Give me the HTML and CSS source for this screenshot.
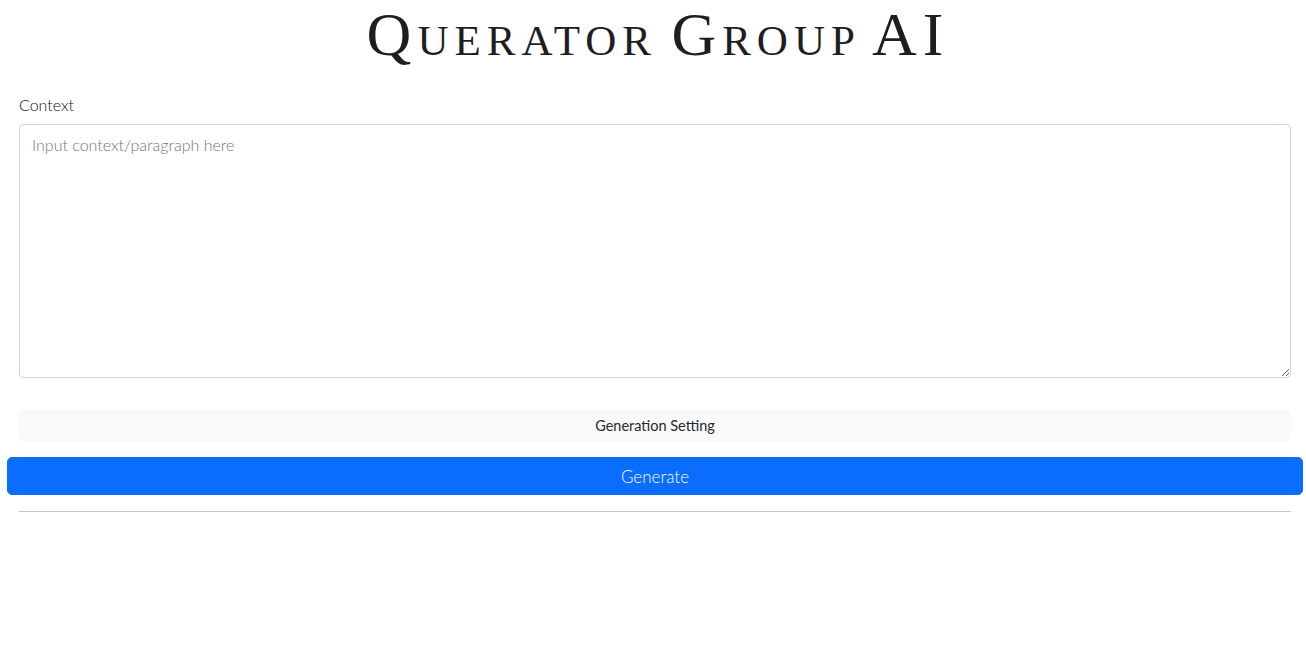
FILE: index.html
```html
<!DOCTYPE html>
<html lang="en">
<head>
<meta charset="utf-8">
<title>Querator Group AI</title>
<link rel="stylesheet" href="styles.css">
</head>
<body>
<div class="page">
  <h1 class="title">Querator Group AI</h1>
  <div class="form">
    <label class="label" for="ctx">Context</label>
    <textarea id="ctx" class="context" placeholder="Input context/paragraph here"></textarea>
    <div class="settings">Generation Setting</div>
  </div>
  <button class="generate" type="button">Generate</button>
  <div class="form">
    <hr class="rule">
  </div>
</div>
</body>
</html>
```

FILE: styles.css
```css
* { box-sizing: border-box; }
html, body { margin: 0; padding: 0; background: #fff; }
body {
  font-family: Lato, "Liberation Sans", sans-serif;
  font-weight: 300;
  color: #212529;
}
.page {
  padding: 0 3px 0 7px;
  display: flex;
  flex-direction: column;
}
.title {
  margin: 1px 0 0;
  padding-left: 6px;
  text-align: center;
  font-family: "Liberation Serif", serif;
  font-variant: small-caps;
  font-weight: 400;
  font-size: 62px;
  letter-spacing: 6px;
  word-spacing: -7px;
  line-height: 66px;
  color: #1d1d22;
}
.form {
  padding: 0 12px;
  display: flex;
  flex-direction: column;
}
.label {
  margin-top: 26px;
  font-size: 16px;
  line-height: 24px;
  color: #111;
}
.context {
  margin-top: 7px;
  height: 254px;
  width: 100%;
  border: 1px solid #ced4da;
  border-radius: 4px;
  padding: 8px 12px;
  font-family: inherit;
  font-weight: 300;
  font-size: 16px;
  line-height: 24px;
  color: #212529;
  resize: vertical;
  outline: none;
}
.context::placeholder { color: #757575; opacity: 1; }
.settings {
  margin-top: 32px;
  height: 31px;
  background: #f8f9fa;
  border-radius: 4px;
  display: flex;
  align-items: center;
  justify-content: center;
  font-size: 14.5px;
  font-weight: 400;
  color: #2a2a2a;
}
.generate {
  margin-top: 16px;
  height: 38px;
  width: 100%;
  border: 1px solid #0d6efd;
  border-radius: 5px;
  background: #0b6dfd;
  color: #fff;
  font-family: inherit;
  font-weight: 300;
  font-size: 17px;
  cursor: pointer;
}
.rule {
  margin: 16px 0 0;
  border: 0;
  border-top: 1px solid #c8c8c8;
}
```
